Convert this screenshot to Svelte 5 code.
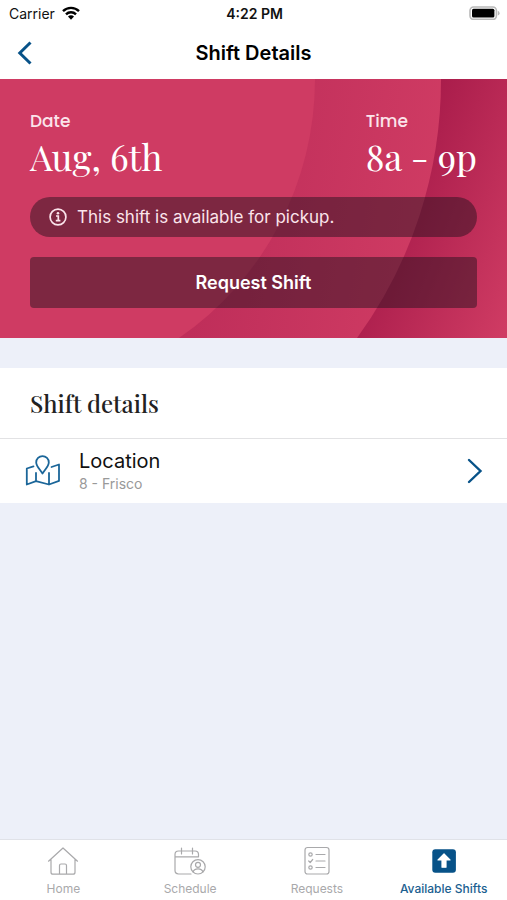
<script>
  const tabs = [
    { id: 'home', label: 'Home' },
    { id: 'schedule', label: 'Schedule' },
    { id: 'requests', label: 'Requests' },
    { id: 'available', label: 'Available Shifts' }
  ];
  let active = $state('available');
</script>

<div class="screen">
  <div class="status">
    <div class="carrier">
      <span>Carrier</span>
      <svg width="18" height="14" viewBox="0 0 18 14" aria-hidden="true">
        <g fill="none" stroke="#000" stroke-width="2.4">
          <path d="M1 5.2a11.4 11.4 0 0 1 16 0" />
          <path d="M4 8.4a7 7 0 0 1 10 0" />
        </g>
        <path d="M6 10.6a4.2 4.2 0 0 1 6 0L9 13.7z" />
      </svg>
    </div>
    <time>4:22 PM</time>
    <svg class="battery" width="31" height="14" viewBox="0 0 31 14" aria-hidden="true">
      <rect x="1" y="1" width="26.4" height="12.4" rx="3.6" fill="#fff" stroke="#b9b9b9" stroke-width="1.6" />
      <rect x="3" y="2.800" width="22.4" height="8.800" rx="1.500" />
      <path d="M28.8 4.8q1.800.8 1.800 2.400t-1.800 2.400z" fill="#b9b9b9" />
    </svg>
  </div>

  <header>
    <button class="back" aria-label="Back">
      <svg width="16" height="24" viewBox="0 0 16 24" aria-hidden="true">
        <path d="M14.500 1.500 3.800 12l10.700 10.500" fill="none" stroke="#075288" stroke-width="3" />
      </svg>
    </button>
    <h1>Shift Details</h1>
  </header>

  <main>
    <section class="hero">
      <svg class="backdrop" viewBox="0 0 507 259" preserveAspectRatio="xMaxYMin slice" aria-hidden="true">
        <defs>
          <linearGradient id="outer" gradientUnits="userSpaceOnUse" x1="385" y1="130" x2="530" y2="190">
            <stop offset="0" stop-color="#a91c4b" />
            <stop offset="1" stop-color="#cf3b63" />
          </linearGradient>
          <linearGradient id="middle" gradientUnits="userSpaceOnUse" x1="210" y1="150" x2="420" y2="190">
            <stop offset="0" stop-color="#bf2e5a" />
            <stop offset="1" stop-color="#cf3b63" />
          </linearGradient>
        </defs>
        <rect width="507" height="259" fill="url(#outer)" />
        <path d="M0 0H441A438 438 0 0 1 357 259H0z" fill="url(#middle)" />
        <path d="M0 0H315A314 314 0 0 1 179 259H0z" fill="#cf3b63" />
      </svg>
      <dl class="when">
        <div>
          <dt>Date</dt>
          <dd>Aug, 6th</dd>
        </div>
        <div>
          <dt>Time</dt>
          <dd>8a - 9p</dd>
        </div>
      </dl>
      <p class="notice">
        <svg width="18" height="18" viewBox="0 0 18 18" aria-hidden="true">
          <circle cx="9" cy="9" r="7.900" fill="none" stroke="#fbe4eb" stroke-width="1.700" />
          <circle cx="9" cy="5.200" r="1.300" fill="#fbe4eb" />
          <path d="M7 8h2.300v4.600M6.800 12.700h4.600" fill="none" stroke="#fbe4eb" stroke-width="1.700" />
        </svg>
        <span>This shift is available for pickup.</span>
      </p>
      <button class="request">Request Shift</button>
    </section>

    <section class="details">
      <h2>Shift details</h2>
      <a class="row" href="#location">
        <svg width="36" height="32" viewBox="0 0 36 32" fill="none" stroke="#1b6699" stroke-width="1.800" stroke-linejoin="round" stroke-linecap="round" aria-hidden="true">
          <path d="M17.500 18.500C14.500 14 11.200 11 11.200 7.400a6.300 6.300 0 0 1 12.600 0c0 3.600-3.300 6.600-6.300 11.100z" />
          <path d="M8.500 11.300 1.800 13.500v16l9.200-3.400 13 3.400 10-3.600V9.500l-7.500 2.500M11 26v-8M24 29.500V18" />
        </svg>
        <span class="place">
          <strong>Location</strong>
          <small>8 - Frisco</small>
        </span>
        <svg width="16" height="26" viewBox="0 0 16 26" aria-hidden="true">
          <path d="m2 2 11.500 11L2 24" fill="none" stroke="#075288" stroke-width="2.400" stroke-linecap="round" />
        </svg>
      </a>
    </section>
  </main>

  <nav>
    {#each tabs as tab (tab.id)}
      <button class="tab" class:active={active === tab.id} onclick={() => (active = tab.id)}>
        <svg width="32" height="30" viewBox="0 0 32 30" fill="none" stroke="currentColor" stroke-width="1.200" stroke-linecap="round" stroke-linejoin="round" aria-hidden="true">
          {#if tab.id === 'home'}
            <path d="M1.500 15.200 16 2l14.500 13.200M4 13.200v13c0 1.200.8 2 2 2h20c1.200 0 2-.8 2-2v-13M12.500 28v-8.500c0-1 .5-1.500 1.500-1.500h4c1 0 1.500.5 1.500 1.500V28" />
          {:else if tab.id === 'schedule'}
            <path d="M17 28H4.500C2.500 28 1 26.500 1 24.500V8.500C1 6.500 2.500 5 4.500 5H21c2 0 3.500 1.500 3.500 3.500v2M1 10.800h23.500M7.500 2v6M18.500 2v6" />
            <circle cx="24" cy="20.800" r="7.200" />
            <circle cx="24" cy="18.800" r="2.500" />
            <path d="M19.200 26c.4-2.200 2.300-3.200 4.800-3.200s4.400 1 4.800 3.200" />
          {:else if tab.id === 'requests'}
            <rect x="4" y="1.500" width="24" height="26.500" rx="2.500" />
            <circle cx="9.500" cy="8.500" r="1.700" />
            <circle cx="9.500" cy="21.500" r="1.700" />
            <path d="m7.700 15 1.500 1.500 2.500-3M15 8.500h9M15 15h9M15 21.500h9" />
          {:else}
            <rect x="4.300" y="3.200" width="23.600" height="23.600" rx="3" fill="#075288" stroke="none" />
            <path d="m16 7.800 6 6.200h-4v7.200h-4V14h-4z" fill="#fff" stroke="#fff" />
          {/if}
        </svg>
        <span>{tab.label}</span>
      </button>
    {/each}
  </nav>
</div>

<style>
  :global(body) {
    margin: 0;
    background: #edf0f9;
  }
  .screen {
    min-height: 100vh;
    display: flex;
    flex-direction: column;
    font-family: Inter, 'Liberation Sans', sans-serif;
    color: #111;
    background: #edf0f9;
  }
  button {
    font: inherit;
    color: inherit;
    border: 0;
    padding: 0;
    background: none;
    cursor: pointer;
  }
  .status {
    display: grid;
    grid-template-columns: 1fr auto 1fr;
    align-items: center;
    height: 26px;
    padding: 0 7px 0 9px;
    background: #fff;
    font-size: 14px;
  }
  .carrier {
    display: flex;
    align-items: center;
    gap: 7px;
  }
  .status time {
    font-weight: 600;
  }
  .battery {
    justify-self: end;
  }
  header {
    display: grid;
    grid-template-columns: 48px 1fr 48px;
    align-items: center;
    height: 53px;
    background: #fff;
  }
  .back {
    display: flex;
    padding-left: 16px;
  }
  h1 {
    margin: 0;
    text-align: center;
    font-size: 20px;
    font-weight: 600;
    line-height: 24px;
    color: #000;
  }
  main {
    flex: 1;
  }
  .hero {
    position: relative;
    padding: 32px 30px 30px;
    background: #cf3b63;
    color: #fff;
  }
  .backdrop {
    position: absolute;
    inset: 0;
    width: 100%;
    height: 100%;
  }
  .when,
  .notice,
  .request {
    position: relative;
  }
  .when {
    display: flex;
    justify-content: space-between;
    margin: 0;
  }
  dt {
    font-family: Poppins, Inter, sans-serif;
    font-size: 17px;
    line-height: 20px;
    font-weight: 500;
    color: #fbe4eb;
  }
  dd {
    margin: 4px 0 0;
    font-family: 'Playfair Display', 'Liberation Serif', serif;
    font-size: 36px;
    line-height: 42px;
  }
  .notice {
    display: flex;
    align-items: center;
    gap: 10px;
    height: 40px;
    margin: 20px 0;
    padding: 0 19px;
    border-radius: 20px;
    background: rgb(28 15 26 / 46%);
    font-size: 17px;
    color: #fbe4eb;
  }
  .request {
    display: block;
    width: 100%;
    height: 51px;
    border-radius: 4px;
    background: rgb(28 15 26 / 46%);
    font-size: 18px;
    font-weight: 600;
  }
  .details {
    margin-top: 30px;
    background: #fff;
  }
  h2 {
    margin: 0;
    padding: 0 30px;
    border-bottom: 1px solid #e2e2e4;
    font-family: 'Playfair Display', 'Liberation Serif', serif;
    font-size: 24px;
    font-weight: 500;
    line-height: 70px;
    color: #222;
  }
  .row {
    display: flex;
    align-items: center;
    height: 64px;
    padding: 0 24px 0 25px;
    color: inherit;
    text-decoration: none;
  }
  .place {
    flex: 1;
    display: flex;
    flex-direction: column;
    padding-left: 18px;
  }
  .place strong {
    font-size: 20px;
    font-weight: 400;
    line-height: 26px;
  }
  .place small {
    font-size: 14px;
    line-height: 20px;
    color: #999;
  }
  nav {
    display: grid;
    grid-template-columns: repeat(4, 1fr);
    height: 60px;
    border-top: 1px solid #e0e2e8;
    background: #fff;
  }
  .tab {
    display: flex;
    flex-direction: column;
    align-items: center;
    gap: 4px;
    padding-top: 6px;
    font-size: 12px;
    line-height: 18px;
    color: #a9a9ab;
  }
  .tab.active {
    color: #1b6090;
    font-weight: 500;
  }
</style>
